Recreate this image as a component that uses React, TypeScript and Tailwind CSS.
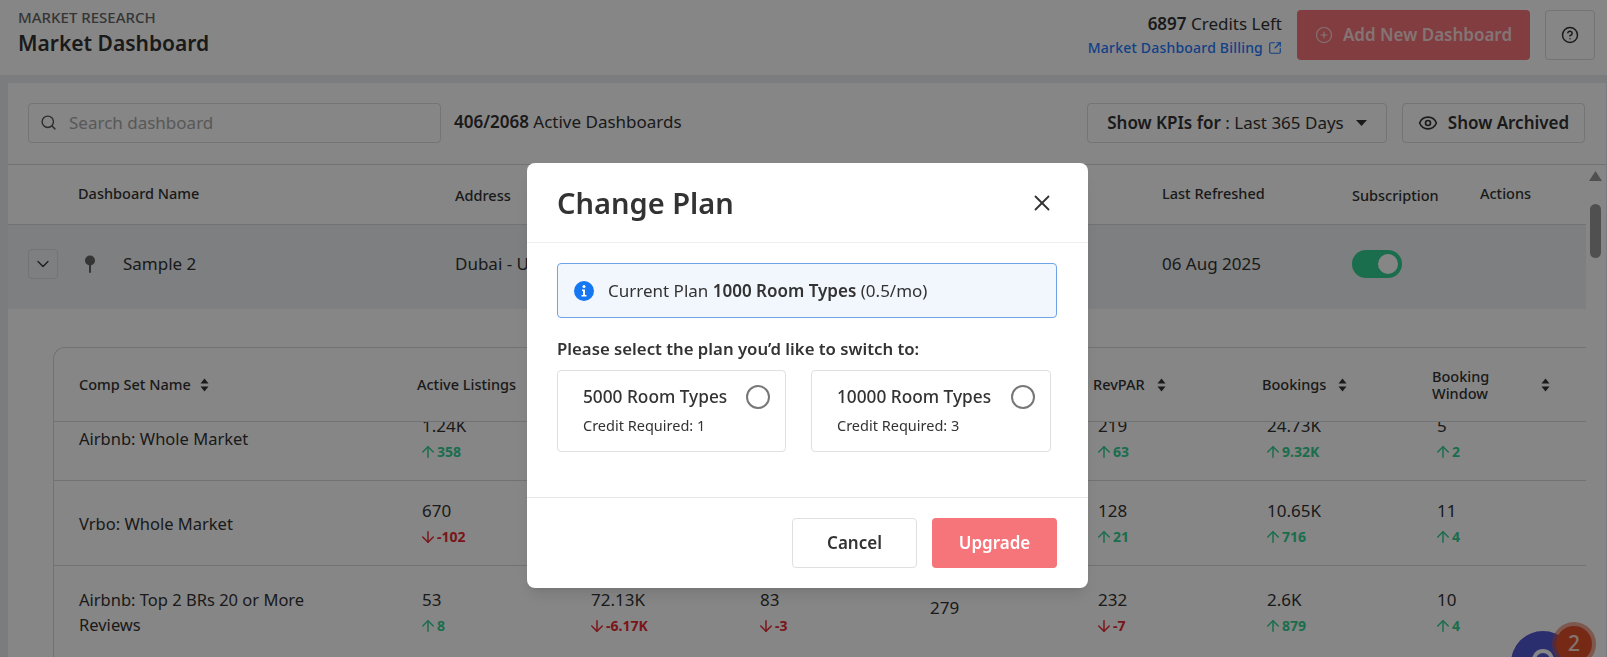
/**
 * Market Dashboard with the Change Plan modal open
 */
import { ArrowDown, ArrowUp, ChevronDown, CircleHelp, CirclePlus, Eye, Search, SquareArrowOutUpRight, X } from 'lucide-react';

function SortIcon() {
  return (
    <svg width="9" height="14" viewBox="0 0 9 14" className="shrink-0 text-[#333]">
      <path d="M4.5 0.5 L8.5 5.5 H0.5 Z" fill="currentColor" />
      <path d="M4.5 13.5 L8.5 8.5 H0.5 Z" fill="currentColor" />
    </svg>
  );
}

function Delta({ value, up }: { value: string; up: boolean }) {
  return (
    <div className={`mt-[3px] flex h-[22px] items-center text-[14px] font-bold ${up ? 'text-[#33d193]' : 'text-[#e82a32]'}`}>
      {up ? <ArrowUp size={18} strokeWidth={2} className="-ml-[3px]" /> : <ArrowDown size={18} strokeWidth={2} className="-ml-[3px]" />}
      <span>{value}</span>
    </div>
  );
}

function Metric({ value, delta, up }: { value: string; delta: string; up: boolean }) {
  return (
    <div className="pl-[5px]">
      <div className="h-[24px] text-[17px] leading-[24px]">{value}</div>
      <Delta value={delta} up={up} />
    </div>
  );
}

export default function App() {
  return (
    <div className="relative h-[657px] w-[1607px] overflow-hidden bg-[#ebecef] font-['Noto_Sans',sans-serif] text-[#333]">
      {/* Encabezado */}
      <header className="flex h-[75px] items-start justify-between bg-white pl-[18px] pr-[12px]">
        <div className="pt-[8px]">
          <div className="text-[15px] font-medium uppercase leading-[18px] text-[#666]">Market Research</div>
          <div className="mt-[2px] text-[21px] font-semibold leading-[30px]">Market Dashboard</div>
        </div>
        <div className="flex items-start pt-[10px]">
          <div className="mr-[15px] flex flex-col items-end pt-[2px]">
            <div className="text-[17px] leading-[24px]"><span className="font-semibold">6897</span> Credits Left</div>
            <div className="flex items-center gap-[5px] text-[14px] font-medium leading-[24px] tracking-[0.2px] text-[#1f7bff]">
              Market Dashboard Billing <SquareArrowOutUpRight size={14} />
            </div>
          </div>
          <button className="flex h-[50px] w-[233px] items-center justify-center gap-[10px] rounded-[4px] bg-[#f5757a] text-[17px] font-semibold text-white/75">
            <CirclePlus size={18} strokeWidth={1.5} /> Add New Dashboard
          </button>
          <button className="ml-[15px] flex h-[50px] w-[50px] items-center justify-center rounded-[4px] border border-[#dcdcdc] bg-white">
            <CircleHelp size={18} />
          </button>
        </div>
      </header>

      {/* Tarjeta principal */}
      <main className="ml-2 mr-px mt-2 flex h-[600px] flex-col bg-white">
        <div className="flex h-[82px] shrink-0 items-center border-b border-[#d8dadd] pb-[2px] pl-5 pr-[21px]">
          <div className="flex h-[40px] w-[413px] items-center gap-[12px] rounded-[4px] border border-[#dcdcdc] px-[11px] text-[17px] text-[#a8a8a8]">
            <Search size={17} className="text-[#555]" /> Search dashboard
          </div>
          <div className="ml-[13px] pb-[1px] text-[17px]"><span className="font-semibold">406/2068</span> Active Dashboards</div>
          <button className="ml-auto flex h-[40px] w-[300px] items-center justify-center gap-[12px] rounded-[4px] border border-[#dcdcdc] text-[17px]">
            <span><span className="font-semibold">Show KPIs for</span> : Last 365 Days</span>
            <svg width="11" height="6" viewBox="0 0 11 6"><path d="M0 0 H11 L5.5 6 Z" fill="#333" /></svg>
          </button>
          <button className="ml-[15px] flex h-[40px] w-[183px] items-center justify-center gap-[10px] rounded-[4px] border border-[#dcdcdc] text-[17px] font-semibold">
            <Eye size={20} /> Show Archived
          </button>
        </div>

        <div className="flex min-h-0 flex-1">
          <div className="min-w-0 flex-1 overflow-hidden">
            {/* Tabla de dashboards */}
            <div className="grid h-[60px] grid-cols-[447px_707px_190px_128px_1fr] border-b border-[#d8dadd] pt-[18px] text-[14.5px] font-medium">
              <div className="pl-[70px]">Dashboard Name</div>
              <div className="pt-[2px]">Address</div>
              <div>Last Refreshed</div>
              <div className="pt-[2px]">Subscription</div>
              <div>Actions</div>
            </div>
            <div className="grid h-[84px] grid-cols-[447px_707px_190px_128px_1fr] items-center bg-[#f0f1f4] pb-[6px] text-[17px]">
              <div className="flex items-center pl-5">
                <div className="flex h-[30px] w-[30px] items-center justify-center rounded-[4px] border border-[#dcdcdc]">
                  <ChevronDown size={20} strokeWidth={1.5} />
                </div>
                <svg width="12" height="18" viewBox="0 0 12 18" className="ml-[26px] text-[#666]">
                  <circle cx="6" cy="5.5" r="5" fill="currentColor" />
                  <rect x="5" y="9" width="2" height="9" rx="1" fill="currentColor" />
                </svg>
                <span className="ml-[27px]">Sample 2</span>
              </div>
              <div>Dubai - United Arab Emirates</div>
              <div>06 Aug 2025</div>
              <div>
                <div className="flex h-[28px] w-[50px] items-center justify-end rounded-full bg-[#33d193] pr-[4px]">
                  <div className="h-[20px] w-[20px] rounded-full bg-white" />
                </div>
              </div>
              <div />
            </div>

            {/* Tabla interna de comp sets */}
            <div className="pl-[45px] pt-[38px]">
              <div className="rounded-tl-xl border-l border-t border-[#d8dadd]">
                <div className="grid h-[74px] grid-cols-[363px_169px_169px_170px_168px_169px_170px_1fr] items-center border-b border-[#d8dadd] text-[14.5px] font-medium">
                  <div className="flex items-center gap-[9px] pl-[25px]">Comp Set Name <SortIcon /></div>
                  <div>Active Listings</div>
                  <div />
                  <div />
                  <div />
                  <div className="flex items-center gap-[12px]">RevPAR <SortIcon /></div>
                  <div className="flex items-center gap-[12px]">Bookings <SortIcon /></div>
                  <div className="flex items-center justify-between pr-[36px] leading-[17px]"><span>Booking<br />Window</span> <SortIcon /></div>
                </div>
                <div className="h-[236px] overflow-hidden text-[16.5px]">
                  <div className="-mt-[26px] grid h-[85px] grid-cols-[363px_169px_169px_170px_168px_169px_170px_1fr] items-center border-b border-[#d8dadd]">
                    <div className="pl-[25px] pt-[2px]">Airbnb: Whole Market</div>
                    <Metric value="1.24K" delta="358" up />
                    <div />
                    <div />
                    <div />
                    <Metric value="219" delta="63" up />
                    <Metric value="24.73K" delta="9.32K" up />
                    <Metric value="5" delta="2" up />
                  </div>
                  <div className="grid h-[85px] grid-cols-[363px_169px_169px_170px_168px_169px_170px_1fr] items-center border-b border-[#d8dadd]">
                    <div className="pl-[25px] pt-[2px]">Vrbo: Whole Market</div>
                    <Metric value="670" delta="-102" up={false} />
                    <div />
                    <div />
                    <div />
                    <Metric value="128" delta="21" up />
                    <Metric value="10.65K" delta="716" up />
                    <Metric value="11" delta="4" up />
                  </div>
                  <div className="grid h-[92px] grid-cols-[363px_169px_169px_170px_168px_169px_170px_1fr] items-center">
                    <div className="pl-[25px] leading-[25px]">Airbnb: Top 2 BRs 20 or More<br />Reviews</div>
                    <Metric value="53" delta="8" up />
                    <Metric value="72.13K" delta="-6.17K" up={false} />
                    <Metric value="83" delta="-3" up={false} />
                    <div className="pb-[8px] pl-[5px] text-[17px]">279</div>
                    <Metric value="232" delta="-7" up={false} />
                    <Metric value="2.6K" delta="879" up />
                    <Metric value="10" delta="4" up />
                  </div>
                </div>
              </div>
            </div>
          </div>

          {/* Barra de scroll */}
          <div className="flex w-[20px] shrink-0 flex-col items-center pr-[1px] pt-[6px]">
            <svg width="13" height="10" viewBox="0 0 13 10"><path d="M6.5 0 L13 10 H0 Z" fill="#999" /></svg>
            <div className="mt-[23px] h-[54px] w-[11px] rounded-full bg-[#999]" />
          </div>
        </div>
      </main>

      {/* Burbuja de chat */}
      <div className="absolute left-[1511px] top-[631px] flex h-[64px] w-[64px] justify-center rounded-full bg-[#5358d2] pt-[18px]">
        <div className="h-[14px] w-[22px] rounded-t-full border-[4px] border-b-0 border-white" />
      </div>
      <div className="absolute left-[1552px] top-[622px] flex h-[44px] w-[44px] items-center justify-center rounded-full bg-[#e0502a]/50">
        <div className="flex h-[36px] w-[36px] items-center justify-center rounded-full bg-[#e0502a] text-[21px] font-medium text-white/80">2</div>
      </div>

      {/* Modal */}
      <div className="fixed inset-0 z-20 bg-[rgba(0,0,0,0.475)] pl-[527px] pt-[163px]">
        <div className="h-[425px] w-[561px] rounded-[8px] bg-white text-[#333] shadow-lg">
          <div className="flex h-[80px] items-center justify-between border-b border-[#eeeeee] pl-[30px] pr-[33px]">
            <h2 className="text-[29px] font-semibold">Change Plan</h2>
            <X size={26} strokeWidth={1.7} />
          </div>
          <div className="h-[254px] px-[30px] pt-[20px]">
            <div className="flex h-[55px] w-[500px] items-center rounded-[4px] border border-[#6ea3ea] bg-[#f2f7fd] pl-[16px] text-[17px]">
              <svg width="20" height="20" viewBox="0 0 20 20" className="mr-[14px]">
                <circle cx="10" cy="10" r="10" fill="#1677f2" />
                <circle cx="10" cy="5.5" r="1.5" fill="#fff" />
                <path d="M8 8.5 H11 V14 H12.5 V15.5 H7.5 V14 H9 V10 H8 Z" fill="#fff" />
              </svg>
              <span>Current Plan <span className="font-semibold">1000 Room Types</span> (0.5/mo)</span>
            </div>
            <div className="mt-[20px] text-[16.75px] font-semibold leading-[22px]">Please select the plan you’d like to switch to:</div>
            <div className="mt-[10px] flex gap-[25px]">
              <div className="flex h-[82px] w-[229px] justify-between rounded-[4px] border border-[#e0e0e0] pl-[25px] pr-[15px] pt-[14px]">
                <div>
                  <div className="text-[17.25px] font-medium leading-[24px]">5000 Room Types</div>
                  <div className="mt-[6px] text-[14.5px] leading-[20px]">Credit Required: 1</div>
                </div>
                <div className="h-[24px] w-[24px] rounded-full border-2 border-[#777]" />
              </div>
              <div className="flex h-[82px] w-[240px] justify-between rounded-[4px] border border-[#e0e0e0] pl-[25px] pr-[15px] pt-[14px]">
                <div>
                  <div className="text-[17.25px] font-medium leading-[24px]">10000 Room Types</div>
                  <div className="mt-[6px] text-[14.5px] leading-[20px]">Credit Required: 3</div>
                </div>
                <div className="h-[24px] w-[24px] rounded-full border-2 border-[#777]" />
              </div>
            </div>
          </div>
          <div className="flex h-[91px] items-start justify-end gap-[15px] border-t border-[#e6e6e6] pr-[31px] pt-[20px]">
            <button className="h-[50px] w-[125px] rounded-[4px] border border-[#dfdfdf] text-[17px] font-semibold">Cancel</button>
            <button className="h-[50px] w-[125px] rounded-[4px] bg-[#f5757a] text-[17px] font-semibold text-white">Upgrade</button>
          </div>
        </div>
      </div>
    </div>
  );
}
